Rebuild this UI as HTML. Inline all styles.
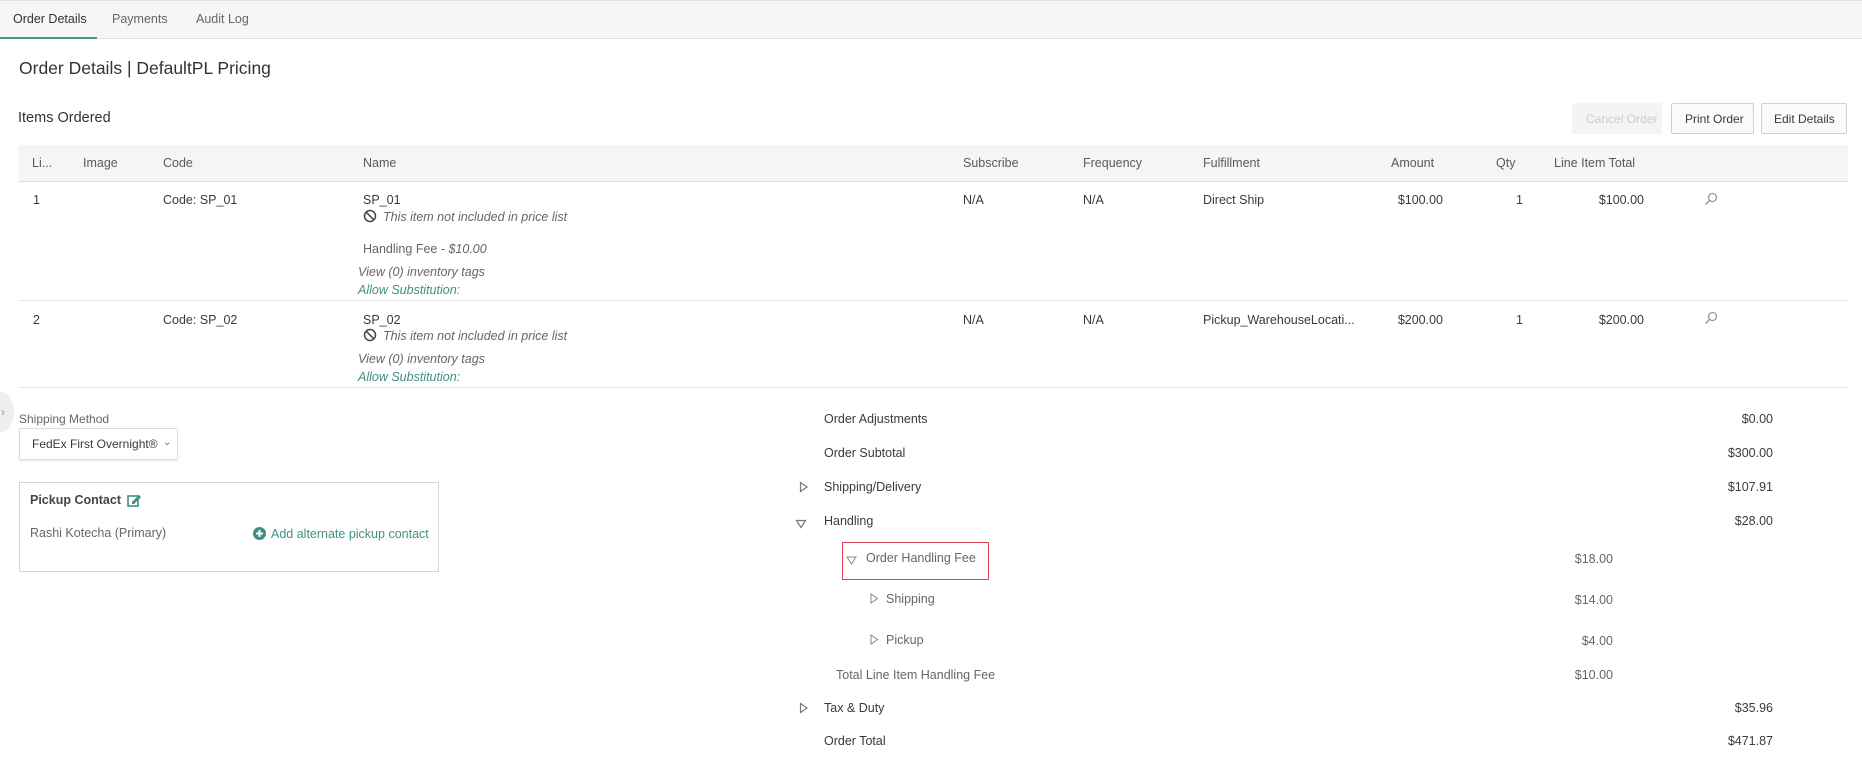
<!DOCTYPE html>
<html><head><meta charset="utf-8"><style>
*{margin:0;padding:0;box-sizing:border-box}
body{width:1862px;height:759px;background:#fff;font-family:"Liberation Sans",Arial,sans-serif;font-size:12.5px;color:#3a3a3a;position:relative;overflow:hidden}
.a{position:absolute;white-space:nowrap;line-height:16px}
.h{color:#5a5a5a}
.i{font-style:italic;color:#666}
.t{color:#3d9184}
.r{text-align:right}
.g{color:#666}
</style></head><body>
<div style="position:absolute;left:0;top:0;width:1862px;height:39px;background:#f6f6f6;border-top:1px solid #e2e2e2;border-bottom:1px solid #e2e2e2"></div>
<div style="position:absolute;left:0;top:37px;width:97px;height:2px;background:#4a9a8c"></div>
<div class="a" style="left:13px;top:11px;color:#333">Order Details</div>
<div class="a g" style="left:112px;top:11px">Payments</div>
<div class="a g" style="left:196px;top:11px">Audit Log</div>

<div class="a" style="left:19px;top:58px;font-size:17.5px;line-height:20px;color:#333">Order Details | DefaultPL Pricing</div>
<div class="a" style="left:18px;top:110px;font-size:14.5px;color:#333">Items Ordered</div>

<div style="position:absolute;left:1572px;top:103px;width:90px;height:31px;background:#f4f4f4;border-radius:2px"></div>
<div class="a" style="left:1586px;top:111px;color:#ccc;font-size:12px">Cancel Order</div>
<div style="position:absolute;left:1671px;top:103px;width:83px;height:31px;border:1px solid #d0d0d0;border-radius:2px;background:#fafafa"></div>
<div class="a" style="left:1685px;top:111px;font-size:12px">Print Order</div>
<div style="position:absolute;left:1761px;top:103px;width:86px;height:31px;border:1px solid #d0d0d0;border-radius:2px;background:#fafafa"></div>
<div class="a" style="left:1774px;top:111px;font-size:12px">Edit Details</div>

<div style="position:absolute;left:18px;top:145px;width:1830px;height:37px;background:#f5f5f5;border-bottom:1px solid #ddd"></div>
<div class="a h" style="left:32px;top:155px">Li...</div>
<div class="a h" style="left:83px;top:155px">Image</div>
<div class="a h" style="left:163px;top:155px">Code</div>
<div class="a h" style="left:363px;top:155px">Name</div>
<div class="a h" style="left:963px;top:155px">Subscribe</div>
<div class="a h" style="left:1083px;top:155px">Frequency</div>
<div class="a h" style="left:1203px;top:155px">Fulfillment</div>
<div class="a h" style="left:1391px;top:155px">Amount</div>
<div class="a h" style="left:1496px;top:155px">Qty</div>
<div class="a h" style="left:1554px;top:155px">Line Item Total</div>

<div class="a" style="left:33px;top:192px">1</div>
<div class="a" style="left:163px;top:192px">Code: SP_01</div>
<div class="a" style="left:363px;top:192px">SP_01</div>
<svg style="position:absolute;left:363px;top:209px" width="14" height="14" viewBox="0 0 14 14"><circle cx="7" cy="7" r="5.5" fill="none" stroke="#444" stroke-width="1.5"/><line x1="3.2" y1="3.2" x2="10.8" y2="10.8" stroke="#444" stroke-width="1.5"/></svg>
<div class="a i" style="left:383px;top:209px">This item not included in price list</div>
<div class="a g" style="left:363px;top:241px">Handling Fee - <i>$10.00</i></div>
<div class="a i" style="left:358px;top:264px">View (0) inventory tags</div>
<div class="a i t" style="left:358px;top:282px">Allow Substitution:</div>
<div class="a" style="left:963px;top:192px">N/A</div>
<div class="a" style="left:1083px;top:192px">N/A</div>
<div class="a" style="left:1203px;top:192px">Direct Ship</div>
<div class="a r" style="left:1343px;width:100px;top:192px">$100.00</div>
<div class="a" style="left:1516px;top:192px">1</div>
<div class="a r" style="left:1544px;width:100px;top:192px">$100.00</div>
<svg style="position:absolute;left:1704px;top:192px" width="14" height="14" viewBox="0 0 14 14"><circle cx="8.5" cy="5.5" r="4" fill="none" stroke="#999" stroke-width="1.3"/><line x1="5.6" y1="8.4" x2="1.5" y2="12.5" stroke="#999" stroke-width="1.5"/></svg>
<div style="position:absolute;left:18px;top:300px;width:1830px;height:1px;background:#e6e6e6"></div>

<div class="a" style="left:33px;top:312px">2</div>
<div class="a" style="left:163px;top:312px">Code: SP_02</div>
<div class="a" style="left:363px;top:312px">SP_02</div>
<svg style="position:absolute;left:363px;top:328px" width="14" height="14" viewBox="0 0 14 14"><circle cx="7" cy="7" r="5.5" fill="none" stroke="#444" stroke-width="1.5"/><line x1="3.2" y1="3.2" x2="10.8" y2="10.8" stroke="#444" stroke-width="1.5"/></svg>
<div class="a i" style="left:383px;top:328px">This item not included in price list</div>
<div class="a i" style="left:358px;top:351px">View (0) inventory tags</div>
<div class="a i t" style="left:358px;top:369px">Allow Substitution:</div>
<div class="a" style="left:963px;top:312px">N/A</div>
<div class="a" style="left:1083px;top:312px">N/A</div>
<div class="a" style="left:1203px;top:312px">Pickup_WarehouseLocati...</div>
<div class="a r" style="left:1343px;width:100px;top:312px">$200.00</div>
<div class="a" style="left:1516px;top:312px">1</div>
<div class="a r" style="left:1544px;width:100px;top:312px">$200.00</div>
<svg style="position:absolute;left:1704px;top:311px" width="14" height="14" viewBox="0 0 14 14"><circle cx="8.5" cy="5.5" r="4" fill="none" stroke="#999" stroke-width="1.3"/><line x1="5.6" y1="8.4" x2="1.5" y2="12.5" stroke="#999" stroke-width="1.5"/></svg>
<div style="position:absolute;left:18px;top:387px;width:1830px;height:1px;background:#e6e6e6"></div>

<div style="position:absolute;left:-12px;top:392px;width:26px;height:40px;border-radius:50%;background:#eee"></div>
<div class="a" style="left:1px;top:404px;color:#999;font-size:12px">&#8250;</div>

<div class="a g" style="left:19px;top:411px;font-size:12px">Shipping Method</div>
<div style="position:absolute;left:19px;top:428px;width:159px;height:32px;border:1px solid #ddd;border-radius:2px;box-shadow:0 1px 2px rgba(0,0,0,.1)"></div>
<div class="a" style="left:32px;top:436px;font-size:12px">FedEx First Overnight®</div>
<div class="a g" style="left:163px;top:435px;font-size:10px">&#8964;</div>

<div style="position:absolute;left:19px;top:482px;width:420px;height:90px;border:1px solid #d6d6d6"></div>
<div class="a" style="left:30px;top:492px;font-weight:bold;color:#444">Pickup Contact</div>
<svg style="position:absolute;left:127px;top:493px" width="15" height="14" viewBox="0 0 15 14"><rect x="1" y="3" width="10" height="10" fill="none" stroke="#3d9184" stroke-width="1.6"/><path d="M5 9 L12 2 L14 4 L7 11 L5 11 Z" fill="#3d9184"/></svg>
<div class="a g" style="left:30px;top:525px">Rashi Kotecha (Primary)</div>
<svg style="position:absolute;left:253px;top:527px" width="13" height="13" viewBox="0 0 13 13"><circle cx="6.5" cy="6.5" r="6.5" fill="#3d9184"/><path d="M6.5 3v7M3 6.5h7" stroke="#fff" stroke-width="2"/></svg>
<div class="a t" style="left:271px;top:526px">Add alternate pickup contact</div>

<div class="a" style="left:824px;top:411px">Order Adjustments</div>
<div class="a r" style="left:1673px;width:100px;top:411px">$0.00</div>
<div class="a" style="left:824px;top:445px">Order Subtotal</div>
<div class="a r" style="left:1673px;width:100px;top:445px">$300.00</div>
<svg style="position:absolute;left:799px;top:481px" width="10" height="12"><path d="M1.5 1.5 L8 6 L1.5 10.5 Z" fill="none" stroke="#777" stroke-width="1.2"/></svg>
<div class="a" style="left:824px;top:479px">Shipping/Delivery</div>
<div class="a r" style="left:1673px;width:100px;top:479px">$107.91</div>
<svg style="position:absolute;left:795px;top:519px" width="12" height="10"><path d="M1.5 1.5 L10.5 1.5 L6 8.5 Z" fill="none" stroke="#777" stroke-width="1.2"/></svg>
<div class="a" style="left:824px;top:513px">Handling</div>
<div class="a r" style="left:1673px;width:100px;top:513px">$28.00</div>
<div style="position:absolute;left:842px;top:542px;width:147px;height:38px;border:1px solid #d9434b"></div>
<svg style="position:absolute;left:846px;top:556px" width="11" height="9"><path d="M1 1 L10 1 L5.5 8 Z" fill="none" stroke="#888" stroke-width="1"/></svg>
<div class="a g" style="left:866px;top:550px">Order Handling Fee</div>
<div class="a r g" style="left:1513px;width:100px;top:551px">$18.00</div>
<svg style="position:absolute;left:870px;top:593px" width="9" height="11"><path d="M1 1 L7.5 5.5 L1 10 Z" fill="none" stroke="#888" stroke-width="1"/></svg>
<div class="a g" style="left:886px;top:591px">Shipping</div>
<div class="a r g" style="left:1513px;width:100px;top:592px">$14.00</div>
<svg style="position:absolute;left:870px;top:634px" width="9" height="11"><path d="M1 1 L7.5 5.5 L1 10 Z" fill="none" stroke="#888" stroke-width="1"/></svg>
<div class="a g" style="left:886px;top:632px">Pickup</div>
<div class="a r g" style="left:1513px;width:100px;top:633px">$4.00</div>
<div class="a g" style="left:836px;top:667px">Total Line Item Handling Fee</div>
<div class="a r g" style="left:1513px;width:100px;top:667px">$10.00</div>
<svg style="position:absolute;left:799px;top:702px" width="10" height="12"><path d="M1.5 1.5 L8 6 L1.5 10.5 Z" fill="none" stroke="#777" stroke-width="1.2"/></svg>
<div class="a" style="left:824px;top:700px">Tax &amp; Duty</div>
<div class="a r" style="left:1673px;width:100px;top:700px">$35.96</div>
<div class="a" style="left:824px;top:733px">Order Total</div>
<div class="a r" style="left:1673px;width:100px;top:733px">$471.87</div>
</body></html>
